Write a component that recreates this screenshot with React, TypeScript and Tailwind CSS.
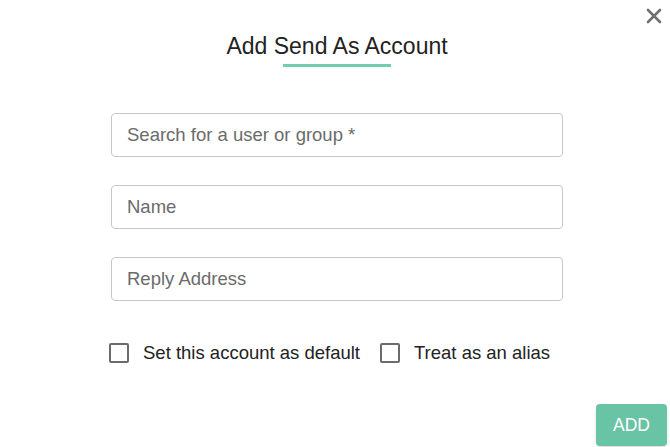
import { X } from 'lucide-react';

function Field({ placeholder }: { placeholder: string }) {
  return (
    <input
      type="text"
      placeholder={placeholder}
      className="w-[452px] h-[44px] px-[15px] border border-[#c8c8c8] rounded-[4px] text-[18.5px] text-[#333] placeholder:text-[#6b6b6b] outline-none"
    />
  );
}

function Check({ label }: { label: string }) {
  return (
    <label className="flex items-center gap-[14px] text-[18.5px] text-[#222]">
      <span className="w-[20px] h-[20px] border-2 border-[#6b6b6b] rounded-[2px]" />
      {label}
    </label>
  );
}

export default function App() {
  return (
    <div
      className="relative w-full h-[447px] bg-white overflow-hidden flex flex-col"
      style={{ fontFamily: '"Liberation Sans", Arial, sans-serif' }}
    >
      <button className="absolute top-[3px] right-[3px] p-[1px] text-[#707070]">
        <X className="w-[24px] h-[24px]" strokeWidth={2.6} />
      </button>

      <div className="pt-[33px] flex flex-col items-center pl-[4px]">
        <h2 className="text-[23px] leading-[27px] text-[#222]">Add Send As Account</h2>
        <div className="mt-[4px] w-[108px] h-[3px] bg-[#72cdb0]" />
      </div>

      <div className="mt-[46px] pl-[111px] flex flex-col gap-[28px]">
        <Field placeholder="Search for a user or group *" />
        <Field placeholder="Name" />
        <Field placeholder="Reply Address" />
      </div>

      <div className="mt-[40px] pl-[109px] flex items-center gap-[20px] h-[24px]">
        <Check label="Set this account as default" />
        <Check label="Treat as an alias" />
      </div>

      <div className="mt-[39px] flex justify-end pr-[3px]">
        <button className="w-[71px] h-[42px] rounded-[4px] bg-[#69c4a5] text-white text-[17.5px] shadow-md">
          ADD
        </button>
      </div>
    </div>
  );
}
